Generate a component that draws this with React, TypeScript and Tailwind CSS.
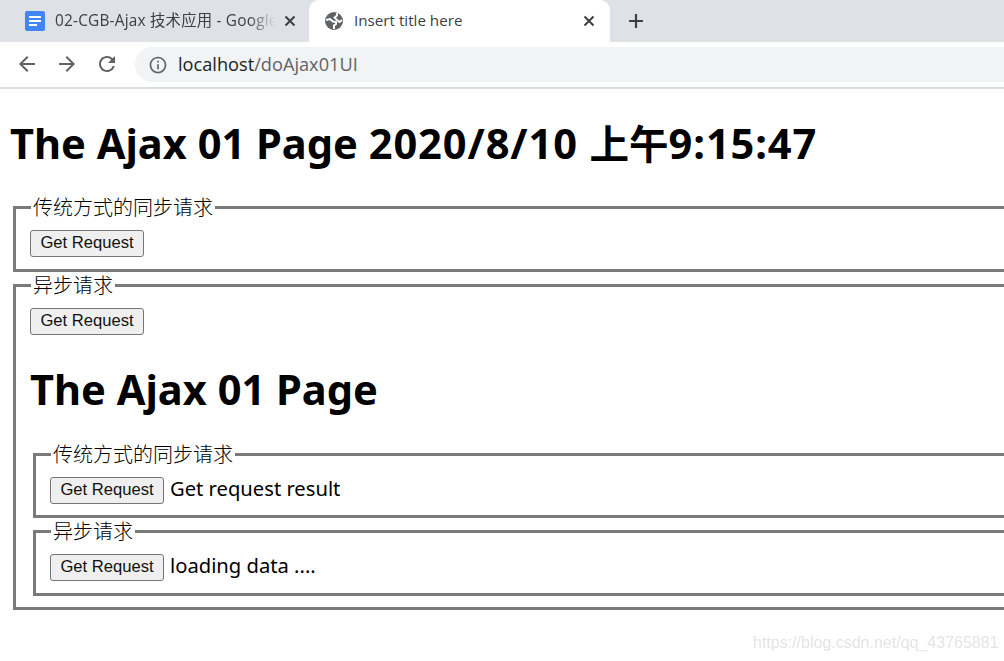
const cjk = "font-['Liberation_Sans','Noto_Sans_CJK_SC',sans-serif]";

const GetButton = () => (
  <button className="h-[27px] w-[114px] shrink-0 rounded-[3px] border border-[#767676] bg-[#efefef] text-center font-['Liberation_Sans',sans-serif] text-[16.6px] leading-none text-[#111]">
    Get Request
  </button>
);

const Box = ({ title, pb, children }: { title: string; pb: string; children: React.ReactNode }) => (
  <fieldset className={`${pb} block w-full min-w-0 border-[3px] border-[#7a7a7a] pl-[14px]`}>
    <legend className={`${cjk} ml-[1px] px-[2px] pt-[3px] text-[20px] font-light leading-[23px] text-black`}>{title}</legend>
    {children}
  </fieldset>
);

const Result = ({ text }: { text: string }) => (
  <span className="ml-[6px] font-['Noto_Sans',sans-serif] text-[20.2px] leading-[23px] text-black">{text}</span>
);

const DocIcon = () => (
  <svg width="20" height="20" viewBox="0 0 20 20">
    <rect width="20" height="20" rx="2" fill="#4285f4" />
    <path d="M4 5h12v2H4zM4 9h12v2H4zM4 13h8v2H4z" fill="#fff" />
  </svg>
);

const GlobeIcon = () => (
  <svg width="18" height="18" viewBox="0 0 18 18" fill="none">
    <circle cx="9" cy="9" r="9" fill="#5f6368" />
    <path d="M1 8l4-1 3 2.500 3 .5v2l-2 1.500V17" stroke="#fff" strokeWidth="2" />
    <path d="M12 1v2.500L9.500 5.500 12 8l2.500 2 2.500-2" stroke="#fff" strokeWidth="1.800" />
  </svg>
);

const CloseIcon = () => (
  <svg width="12" height="12" viewBox="0 0 12 12" stroke="#3c4043" strokeWidth="2" fill="none">
    <path d="M1.500 1.500l9 9M10.500 1.500l-9 9" />
  </svg>
);

const NavIcon = ({ d }: { d: string }) => (
  <svg width="24" height="24" viewBox="0 0 24 24" fill="#5f6368">
    <path d={d} />
  </svg>
);

const BrowserChrome = () => (
  <div className="font-['Open_Sans','Noto_Sans_CJK_SC',sans-serif]">
    <div className="flex h-[42px] items-end bg-[#dee1e6]">
      <div className="flex h-[42px] w-[309px] shrink-0 items-center pb-[1px] pl-[25px]">
        <DocIcon />
        <span className="ml-[10px] w-[220px] overflow-hidden whitespace-nowrap text-[15.4px] tracking-[0.2px] text-[#3c4043] [mask-image:linear-gradient(to_right,black_88%,transparent)]">02-CGB-Ajax 技术应用 - Google</span>
        <span className="ml-[9px]"><CloseIcon /></span>
      </div>
      <div className="flex h-[42px] w-[301px] shrink-0 items-center rounded-t-[10px] bg-white pb-[1px] pl-[16px]">
        <GlobeIcon />
        <span className="ml-[11px] w-[229px] whitespace-nowrap text-[15.2px] text-[#3c4043]">Insert title here</span>
        <CloseIcon />
      </div>
      <div className="ml-[16px] flex h-[42px] items-center">
        <svg width="20" height="20" viewBox="0 0 20 20" stroke="#3c4043" strokeWidth="2.200" fill="none">
          <path d="M10 3v14M3 10h14" />
        </svg>
      </div>
    </div>
    <div className="flex h-[47px] items-start border-b-[2px] border-[#dadce0] bg-white">
      <div className="ml-[15px] mt-[10px] flex gap-[16px]">
        <NavIcon d="M20 11H7.830l5.590-5.590L12 4l-8 8 8 8 1.410-1.410L7.830 13H20v-2z" />
        <NavIcon d="M4 11h12.170l-5.590-5.590L12 4l8 8-8 8-1.410-1.410L16.170 13H4v-2z" />
        <NavIcon d="M17.650 6.350A7.958 7.958 0 0 0 12 4c-4.420 0-7.990 3.580-7.990 8s3.570 8 7.990 8c3.730 0 6.840-2.550 7.730-6h-2.080A5.990 5.990 0 0 1 12 18c-3.310 0-6-2.690-6-6s2.690-6 6-6c1.660 0 3.140.69 4.220 1.780L13 11h7V4l-2.350 2.350z" />
      </div>
      <div className="ml-[16px] mt-[5px] flex h-[35px] flex-1 items-center rounded-l-[18px] bg-[#f1f3f4] pl-[13px]">
        <svg width="20" height="20" viewBox="0 0 24 24" fill="#5f6368">
          <path d="M11 7h2v2h-2zm0 4h2v6h-2zm1-9C6.480 2 2 6.480 2 12s4.480 10 10 10 10-4.480 10-10S17.520 2 12 2zm0 18c-4.410 0-8-3.590-8-8s3.590-8 8-8 8 3.590 8 8-3.590 8-8 8z" />
        </svg>
        <span className="ml-[10px] text-[18.2px] text-[#202124]">
          localhost<span className="text-[#5f6368]">/doAjax01UI</span>
        </span>
      </div>
    </div>
  </div>
);

export default function App() {
  return (
    <div className="relative h-[661px] w-[1004px] overflow-hidden bg-white">
      <BrowserChrome />
      <div className="w-[1100px] pl-[10px]">
        <h1 className="mt-[27px] whitespace-nowrap font-['Noto_Sans','Noto_Sans_CJK_SC',sans-serif] text-[41.6px] font-bold leading-[54px] text-black">
          The Ajax 01 Page <span className="tracking-[0.9px]">2020/8/10 </span><span className="text-[39.5px]">上午</span><span className="tracking-[0.9px]">9:15:47</span>
        </h1>
        <div className="ml-[3px] mt-[23px]">
          <Box title="传统方式的同步请求" pb="pb-[12px]">
            <div className="mt-[10px] flex"><GetButton /></div>
          </Box>
          <Box title="异步请求" pb="pb-[11px]">
            <div className="mt-[10px] flex"><GetButton /></div>
            <h1 className="mt-[27px] font-['Noto_Sans','Noto_Sans_CJK_SC',sans-serif] text-[41.6px] font-bold leading-[54px] text-black">The Ajax 01 Page</h1>
            <div className="ml-[3px] mt-[25px]">
              <Box title="传统方式的同步请求" pb="pb-[11px]">
                <div className="mt-[10px] flex items-start"><GetButton /><Result text="Get request result" /></div>
              </Box>
              <Box title="异步请求" pb="pb-[12px]">
                <div className="mt-[10px] flex items-start"><GetButton /><Result text="loading data ...." /></div>
              </Box>
            </div>
          </Box>
        </div>
      </div>
      <div className="absolute left-[753px] top-[633px] font-['Liberation_Sans',sans-serif] text-[16px] leading-[20px] text-[#e4e4e4] blur-[0.4px]">
        https://blog.csdn.net/qq_43765881
      </div>
    </div>
  );
}
